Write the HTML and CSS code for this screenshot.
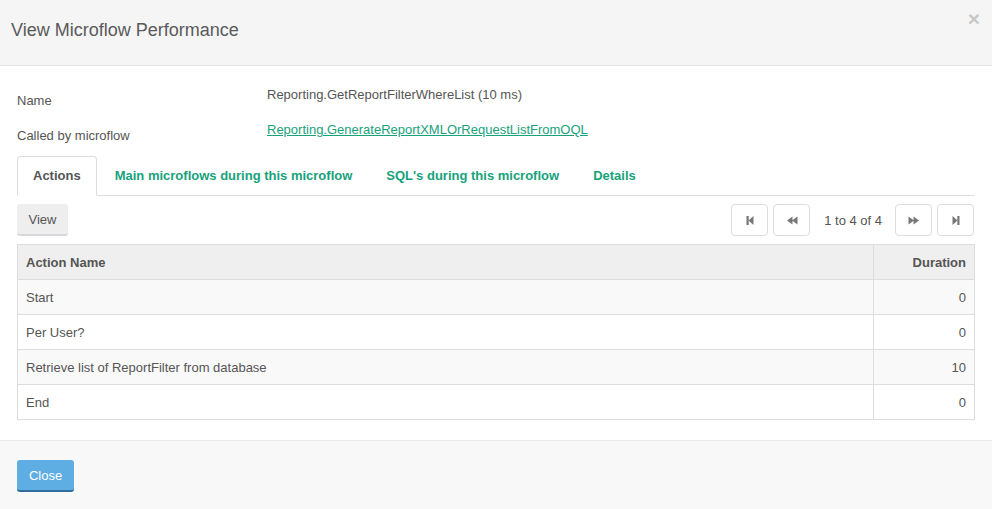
FILE: index.html
```html
<!DOCTYPE html>
<html>
<head>
<meta charset="utf-8">
<link rel="stylesheet" href="styles.css">
</head>
<body>
<div class="modal">
  <div class="modal-header">
    <h4 class="modal-title">View Microflow Performance</h4>
    <span class="close">×</span>
  </div>
  <div class="modal-body">
    <div class="form-row">
      <div class="label">Name</div>
      <div class="value">Reporting.GetReportFilterWhereList (10 ms)</div>
    </div>
    <div class="form-row">
      <div class="label">Called by microflow</div>
      <div class="value"><a href="#">Reporting.GenerateReportXMLOrRequestListFromOQL</a></div>
    </div>
    <ul class="tabs">
      <li class="tab active">Actions</li>
      <li class="tab">Main microflows during this microflow</li>
      <li class="tab">SQL's during this microflow</li>
      <li class="tab">Details</li>
    </ul>
    <div class="toolbar">
      <button class="btn-view">View</button>
      <div class="pager">
        <button class="pbtn"><svg width="10" height="11" viewBox="0 0 10 11"><rect x="1.5" y="1" width="2.2" height="9" fill="#777"/><path d="M8.5 1 L3.5 5.5 L8.5 10 Z" fill="#777"/></svg></button>
        <button class="pbtn"><svg width="12" height="11" viewBox="0 0 12 11"><path d="M6.5 1.5 L1 5.5 L6.5 9.5 Z M11.5 1.5 L6 5.5 L11.5 9.5 Z" fill="#777"/></svg></button>
        <span class="pinfo">1 to 4 of 4</span>
        <button class="pbtn"><svg width="12" height="11" viewBox="0 0 12 11"><path d="M0.5 1.5 L6 5.5 L0.5 9.5 Z M5.5 1.5 L11 5.5 L5.5 9.5 Z" fill="#777"/></svg></button>
        <button class="pbtn"><svg width="10" height="11" viewBox="0 0 10 11"><path d="M1.5 1 L6.5 5.5 L1.5 10 Z" fill="#777"/><rect x="6.3" y="1" width="2.2" height="9" fill="#777"/></svg></button>
      </div>
    </div>
    <table class="grid">
      <thead>
        <tr><th>Action Name</th><th class="num dur">Duration</th></tr>
      </thead>
      <tbody>
        <tr class="odd"><td>Start</td><td class="num">0</td></tr>
        <tr><td>Per User?</td><td class="num">0</td></tr>
        <tr class="odd"><td>Retrieve list of ReportFilter from database</td><td class="num">10</td></tr>
        <tr><td>End</td><td class="num">0</td></tr>
      </tbody>
    </table>
  </div>
  <div class="modal-footer">
    <button class="btn-close">Close</button>
  </div>
</div>
</body>
</html>
```
FILE: styles.css
```css
* { box-sizing: border-box; }
html, body { margin: 0; padding: 0; }
body {
  font-family: "Liberation Sans", Arial, sans-serif;
  font-size: 13px;
  color: #555;
  background: #fff;
}
.modal {
  width: 992px;
  height: 509px;
  display: flex;
  flex-direction: column;
}
.modal-header {
  height: 66px;
  background: #f5f5f5;
  border-bottom: 1px solid #e5e5e5;
  position: relative;
  padding: 19px 11px 0;
}
.modal-title {
  margin: 0;
  font-size: 18px;
  font-weight: normal;
  line-height: 22px;
  color: #5a5a5a;
}
.close {
  position: absolute;
  right: 12px;
  top: 8px;
  font-size: 21px;
  font-weight: bold;
  color: #c8c8c8;
  line-height: 22px;
}
.modal-body {
  flex: 1;
  padding: 14px 17px 0;
}
.form-row {
  display: grid;
  grid-template-columns: 250px 1fr;
  height: 35px;
}
.label { padding-top: 13px; line-height: 16px; }
.value { padding-top: 7px; line-height: 16px; }
.value a { color: #17a27b; text-decoration: underline; }
.tabs {
  list-style: none;
  margin: 6px 0 0;
  padding: 0;
  display: flex;
  border-bottom: 1px solid #ddd;
  height: 40px;
}
.tab {
  margin-right: 2px;
  padding: 0 15px;
  line-height: 38px;
  border: 1px solid transparent;
  border-radius: 4px 4px 0 0;
  font-weight: bold;
  color: #17a27b;
  margin-bottom: -1px;
}
.tab.active {
  color: #555;
  background: #fff;
  border-color: #ddd #ddd transparent;
  height: 40px;
}
.toolbar {
  display: flex;
  justify-content: space-between;
  align-items: center;
  margin-top: 8px;
  height: 32px;
}
.btn-view {
  font-family: inherit;
  font-size: 13px;
  color: #555;
  background: #eeeeef;
  border: none;
  border-bottom: 2px solid #d8d8dc;
  border-radius: 3px;
  height: 32px;
  width: 51px;
  padding: 0;
}
.pager {
  display: flex;
  align-items: center;
  gap: 5px;
  margin-right: 1px;
}
.pbtn {
  width: 37px;
  height: 32px;
  background: #fff;
  border: 1px solid #ddd;
  border-radius: 4px;
  padding: 0;
  display: flex;
  align-items: center;
  justify-content: center;
}
.pinfo {
  padding: 0 8px 0 9px;
  color: #555;
}
.grid {
  width: 100%;
  margin-top: 8px;
  border-collapse: collapse;
  border: 1px solid #ddd;
}
.grid th, .grid td {
  height: 35px;
  padding: 0 8px;
  border-bottom: 1px solid #ddd;
  text-align: left;
  vertical-align: middle;
}
.grid th {
  background: #efefef;
  font-weight: bold;
}
.grid .num {
  text-align: right;
  border-left: 1px solid #ddd;
  width: 101px;
}
.grid tr.odd td { background: #f9f9f9; }
.modal-footer {
  height: 69px;
  background: #f8f8f8;
  border-top: 1px solid #e8e8e8;
  padding: 19px 17px 0;
}
.btn-close {
  font-family: inherit;
  font-size: 13px;
  color: #fff;
  background: #5eade3;
  border: none;
  border-bottom: 2px solid #2f6d9c;
  border-radius: 3px;
  width: 57px;
  height: 32px;
  padding: 0;
}
```
